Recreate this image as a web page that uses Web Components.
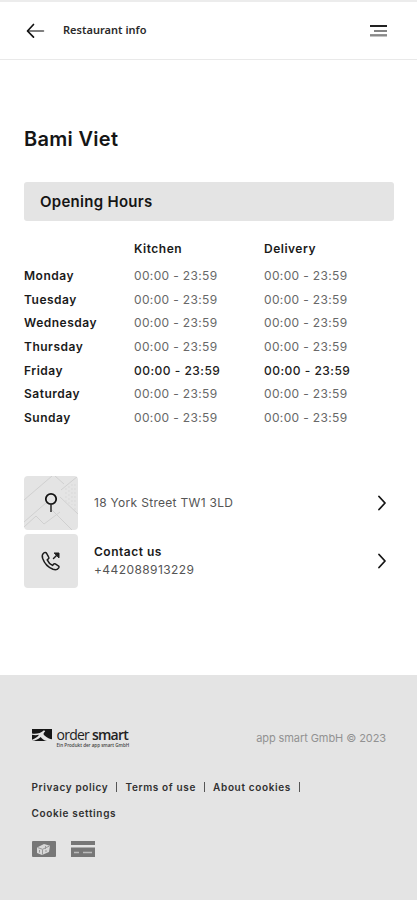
<!DOCTYPE html>
<html lang="en">
<head>
<meta charset="utf-8">
<title>Restaurant info</title>
<style>
html,body{margin:0;background:#fff}
body{font-family:Inter,"Liberation Sans",sans-serif;color:#151515;width:417px;height:900px;overflow:hidden}
</style>
</head>
<body>
<restaurant-page></restaurant-page>
<script>
function define(name, html) {
  const t = document.createElement('template');
  t.innerHTML = html;
  customElements.define(name, class extends HTMLElement {
    constructor() {
      super();
      this.attachShadow({ mode: 'open' }).append(t.content.cloneNode(true));
    }
  });
}

define('top-bar', `<style>
:host{display:flex;align-items:center;box-sizing:border-box;height:60px;padding:0 29px 0 26px;border-top:2px solid #ececec;border-bottom:1px solid #e9e9e9}
.t{margin-left:18px;padding-bottom:1px;font:600 11px/16px "Noto Sans",sans-serif;letter-spacing:.02px;flex:1;color:#2a2a2a}
svg{display:block}
</style>
<svg width="19" height="16" viewBox="0 0 19 16" fill="none" stroke-linecap="round" stroke-linejoin="round"><path d="M2 8H17.5" stroke="#555" stroke-width="1.5"/><path d="M7.500 1.500 1.500 8l6 6.200" stroke="#111" stroke-width="1.700"/></svg>
<span class="t"><slot></slot></span>
<svg width="19" height="14" viewBox="0 0 19 14"><path d="M1 2H18" stroke="#222" stroke-width="2"/><path d="M5 7H18" stroke="#777" stroke-width="1.800"/><path d="M1 11.300H18" stroke="#888" stroke-width="2.400"/></svg>`);

define('section-title', `<style>
:host{display:block;box-sizing:border-box;height:39px;padding-left:16px;border-radius:3px;background:#e4e4e4;font-weight:600;font-size:15px;line-height:40px;letter-spacing:.28px}
</style><slot></slot>`);

customElements.define('hours-row', class extends HTMLElement {
  connectedCallback() {
    const root = this.attachShadow({ mode: 'open' });
    root.innerHTML = `<style>
:host{display:grid;grid-template-columns:110px 130px 1fr;height:23.550px;line-height:23.550px;font-size:12px}
b{font-weight:600;letter-spacing:.5px;color:#1a1a1a}
span{color:#686868;letter-spacing:.35px}
:host([today]) span{font-weight:500;color:#222;letter-spacing:.48px}
:host([head]){height:29.400px;line-height:27px}
</style>`;
    const head = this.hasAttribute('head');
    [this.getAttribute('day') || '', this.getAttribute('kitchen'), this.getAttribute('delivery')].forEach((s, i) => {
      const el = document.createElement(head || i === 0 ? 'b' : 'span');
      el.textContent = s;
      root.append(el);
    });
  }
});

define('contact-row', `<style>
:host{display:flex;align-items:center;height:54px;font-size:12px;line-height:17.500px;color:#555}
.tile{width:54px;height:54px;border-radius:4px;overflow:hidden;background:#e4e4e4}
.text{flex:1;margin-left:16px}
svg{display:block}
</style>
<div class="tile"><slot name="icon"></slot></div><div class="text"><slot></slot></div>
<svg width="24" height="18" viewBox="0 0 24 18" fill="none"><path d="M9 2.500 15 9 9 15.500" stroke="#151515" stroke-width="1.800" stroke-linecap="round" stroke-linejoin="round"/></svg>`);

define('map-icon', `<style>:host,svg{display:block}</style>
<svg width="54" height="54" viewBox="0 0 54 54" fill="none"><g stroke="#d0d0d0"><path d="M0 24 28 0M0 46 23 26M37 14 54 0M31 0 40 8M36 21 54 38M27 33 48 54M12 40 20 48 36 36M12 40 0 51"/><path d="M42 12v14M45 10v18M48 8v21M51 8v26" stroke-dasharray="2 2" stroke="#d9d9d9"/></g><circle cx="27" cy="23" r="5.200" stroke="#151515" stroke-width="1.800"/><path d="M27 28.500V36" stroke="#333" stroke-width="1.600"/></svg>`);

define('phone-icon', `<style>:host,svg{display:block}</style>
<svg width="54" height="54" viewBox="0 0 54 54" fill="none" stroke="#1d1d1d" stroke-width="1.500" stroke-linejoin="round" stroke-linecap="round"><path d="M19.700 19c-1.500 1.200-1.800 3-1.100 5.300 1.800 5.200 5.300 9 10.400 11 2.300.8 4.500.300 5.700-1.500.5-.8.400-1.500-.4-2l-3-1.900c-.7-.4-1.300-.3-1.800.3l-1 1.200c-2.500-1.100-4.200-3-5.300-5.500l1.200-1.100c.6-.5.7-1.100.3-1.700l-2.100-3.800c-.5-.8-1.800-1.100-2.900-.3z"/><path d="M29.500 24.500 33.500 20.500"/><path d="M30.500 19H35V23.500z" fill="#1d1d1d" stroke-width="1"/></svg>`);

define('order-smart-logo', `<style>
:host{display:grid;grid-template-columns:20px auto;column-gap:5px;width:110px;font-family:"Open Sans",sans-serif;color:#222}
svg{display:block;margin-top:1px}
.n{font-size:14px;line-height:14px;letter-spacing:-.75px;white-space:nowrap}
.n b{font-weight:600}
.s{margin-top:1px;font:600 4.600px/5px "Open Sans",sans-serif;letter-spacing:-.03px;white-space:nowrap;color:#444}
</style>
<svg width="20" height="12" viewBox="0 0 20 12"><path d="M0 0H20V12H0z" fill="#161616"/><path d="M0 4.500C4 5.500 9 4 12 1.200l1.200 1C11.500 4 10.800 5 12.500 6.600 15 9 18 10.200 20 10.200V12H15C12 11.500 10 9.500 8.600 8 6.500 10 4 11.500 0 12v-1.300C3 9.500 6 7.700 7 5.800 5 6.500 2 6.400 0 5.800z" fill="#e4e4e4"/></svg>
<div><div class="n">order <b>smart</b></div><div class="s">Ein Produkt der app smart GmbH</div></div>`);

define('footer-links', `<style>
:host{display:flex;flex-wrap:wrap;font-weight:600;font-size:10px;line-height:26px;letter-spacing:.65px;color:#303030}
</style><slot></slot>`);
define('footer-link', `<style>
:host{display:flex;align-items:center;white-space:nowrap}
i{width:1.500px;height:10px;background:#555;margin:0 8px 0 7.500px}
:host([last]) i{display:none}
</style><slot></slot><i></i>`);

define('payment-icons', `<style>:host{display:flex;gap:15px}svg{display:block}</style>
<svg width="24" height="17" viewBox="0 0 24 17"><rect width="24" height="16" rx="1" fill="#777"/><path d="M5 6.500 12 3l6 1.800-1 6.200-7 3L5 12z" fill="#d8d8d8"/><path d="M10.500 8.500v5M5.500 6.500l5 1.800L17.500 5M13.500 5v3M7.500 9v2.500M14 9v2" stroke="#999" fill="none"/></svg>
<svg width="24" height="17" viewBox="0 0 24 17"><path d="M0 0h24v4H0zM0 6.500h24v9.500H0z" fill="#777"/><path d="M3 11.500h5M12 11.500h9" stroke="#bbb" stroke-width="1.500"/></svg>`);

define('page-footer', `<style>
:host{display:block;box-sizing:border-box;height:225px;background:#e4e4e4;padding:53px 31px 0 31.500px}
.r{display:flex;justify-content:space-between}
.c{font-size:11px;line-height:20px;letter-spacing:-.08px;color:#929292}
footer-links{margin-top:26px}
payment-icons{margin-top:15px}
</style>
<div class="r"><order-smart-logo></order-smart-logo><span class="c">app smart GmbH © 2023</span></div>
<footer-links><footer-link>Privacy policy</footer-link><footer-link>Terms of use</footer-link><footer-link>About cookies</footer-link><footer-link last>Cookie settings</footer-link></footer-links>
<payment-icons></payment-icons>`);

define('restaurant-page', `<style>
:host{display:flex;flex-direction:column;height:900px}
main{flex:1;padding:66px 23px 0 24px}
h1{margin:0 0 29px;font-weight:600;font-size:20px;line-height:27px;letter-spacing:.3px}
section-title{margin-bottom:14px}
.contacts{display:grid;gap:4px;margin-top:46.700px}
.a{letter-spacing:.3px}.c{letter-spacing:.5px;color:#1a1a1a;font-weight:600}.p{letter-spacing:.42px}
</style>
<top-bar>Restaurant info</top-bar>
<main><h1>Bami Viet</h1><section-title>Opening Hours</section-title>
<hours-row head kitchen="Kitchen" delivery="Delivery"></hours-row>
${['Monday','Tuesday','Wednesday','Thursday','Friday','Saturday','Sunday'].map(d => `<hours-row day="${d}" kitchen="00:00 - 23:59" delivery="00:00 - 23:59"${d === 'Friday' ? ' today' : ''}></hours-row>`).join('')}
<div class="contacts"><contact-row><map-icon slot="icon"></map-icon><span class="a">18 York Street TW1 3LD</span></contact-row>
<contact-row><phone-icon slot="icon"></phone-icon><div class="c">Contact us</div><div class="p">+442088913229</div></contact-row></div>
</main><page-footer></page-footer>`);
</script>
</body>
</html>
